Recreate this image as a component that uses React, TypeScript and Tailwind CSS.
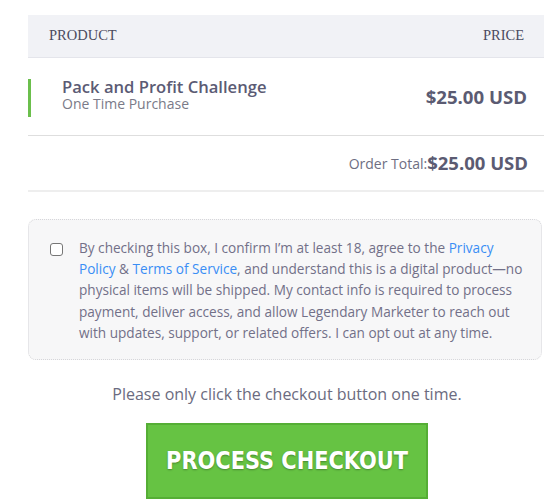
import React from "react";

export default function App() {
  return (
    <div className="w-[544px] h-[500px] overflow-hidden bg-white font-['Open_Sans',sans-serif]">
      <div className="w-[518px] ml-[28px] pt-[15px]">
        {/* Header */}
        <div className="flex items-center justify-between h-[43px] bg-[#f1f2f6] border-b border-[#e4e5eb] pl-[21px] pr-[22px] font-['Liberation_Serif',serif] text-[14.5px] text-[#4b4b60]">
          <span>PRODUCT</span>
          <span>PRICE</span>
        </div>
        {/* Product row */}
        <div className="flex items-center h-[78px] border-b border-[#dedede] pr-[19px]">
          <div className="w-[3px] h-[38px] bg-[#6bbf4c] mt-[2px]" />
          <div className="flex flex-col ml-[31px] mb-[6px]">
            <span className="text-[16.6px] leading-[19px] font-semibold text-[#5b5b74]">Pack and Profit Challenge</span>
            <span className="text-[14px] leading-[15px] text-[#7a7a88]">One Time Purchase</span>
          </div>
          <div className="ml-auto text-[18.6px] font-bold text-[#5b5b72]">$25.00 USD</div>
        </div>
        {/* Order total */}
        <div className="flex items-center justify-end h-[56px] border-b-2 border-[#eeeeee] pr-[18px]">
          <span className="text-[14px] text-[#6e6e82]">Order Total:</span>
          <span className="text-[18.5px] font-bold text-[#5b5b72]">$25.00 USD</span>
        </div>
        {/* Consent box */}
        <div className="mt-[27px] w-[514px] rounded-[8px] border border-dotted border-[#d6d6da] bg-[#f7f7f8] pl-[21px] pr-[16px] pt-[17px] pb-[16px] flex">
          <div className="mt-[6px] w-[13px] h-[13px] shrink-0 rounded-[3px] border border-[#767676] bg-white" />
          <p className="ml-[16px] w-[448px] text-[13.6px] leading-[21.2px] text-[#727088]">
            By checking this box, I confirm I’m at least 18, agree to the{" "}
            <span className="text-[#3a8ef5]">Privacy Policy</span> &amp;{" "}
            <span className="text-[#3a8ef5]">Terms of Service</span>, and understand this is a digital product—no physical items will be shipped. My contact info is required to process payment, deliver access, and allow Legendary Marketer to reach out with updates, support, or related offers. I can opt out at any time.
          </p>
        </div>
        {/* Note */}
        <p className="mt-[22px] text-center text-[16px] leading-[24px] text-[#6b6b80]">
          Please only click the checkout button one time.
        </p>
        {/* Button */}
        <div className="flex justify-center mt-[17px]">
          <button className="w-[282px] h-[76px] bg-[#66c343] border-2 border-[#55ae35] text-white">
            <span className="inline-block scale-x-[0.93] font-['DejaVu_Sans_Condensed',sans-serif] font-bold text-[25px] [text-shadow:0_1px_2px_rgba(0,0,0,0.3)]">
              PROCESS CHECKOUT
            </span>
          </button>
        </div>
      </div>
    </div>
  );
}
